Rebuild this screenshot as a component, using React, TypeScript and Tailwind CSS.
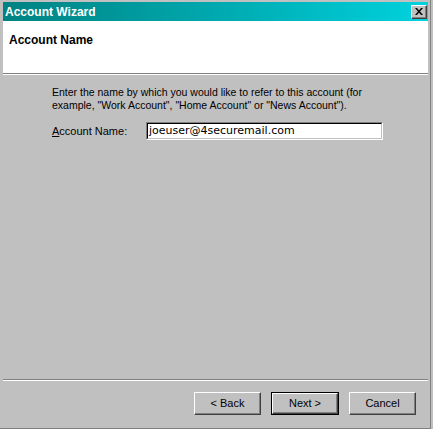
export default function App() {
  return (
    <div className="w-[433px] h-[429px] bg-[#c0c0c0] font-['Liberation_Sans',Arial,sans-serif] text-black">
      <div className="flex h-[429px] w-[431px] flex-col border-r border-b border-r-[#808080] border-b-[#808080] pl-[3px] pr-[2px] pt-[2px] pb-[1px]">
        {/* title bar */}
        <div className="flex h-[19px] items-center justify-between bg-gradient-to-r from-[#008282] to-[#00d2de] pl-[2px] pr-[1px]">
          <span className="text-[12px] font-bold text-white leading-none">Account Wizard</span>
          <button className="flex h-[14px] w-[16px] items-center justify-center border border-t-white border-l-white border-r-[#404040] border-b-[#404040] bg-[#c0c0c0] shadow-[inset_-1px_-1px_0_#808080]">
            <svg width="8" height="7" viewBox="0 0 8 7">
              <path d="M0 0h2l2 2.5L6 0h2L5 3.5 8 7H6L4 4.5 2 7H0l3-3.5z" fill="#000" />
            </svg>
          </button>
        </div>
        {/* header */}
        <div className="h-[54px] border-b border-b-white bg-white">
          <div className="h-[53px] border-b border-b-[#808080] pl-[6px] pt-[12px]">
            <h1 className="text-[12px] font-bold leading-[14px]">Account Name</h1>
          </div>
        </div>
        {/* body */}
        <div className="flex flex-1 flex-col pl-[49px] pt-[11px] text-[11px]">
          <p className="text-[10.5px] leading-[13px]">
            Enter the name by which you would like to refer to this account (for
            <br />
            example, "Work Account", "Home Account" or "News Account").
          </p>
          <div className="mt-[10px] flex items-center">
            <label className="w-[94px] leading-[13px]">
              <span className="underline">A</span>ccount Name:
            </label>
            <div className="h-[18px] w-[237px] border border-t-[#808080] border-l-[#808080] border-r-white border-b-white">
              <div className="flex h-full items-center border border-t-black border-l-black border-r-[#c0c0c0] border-b-[#c0c0c0] bg-white pl-[1px] font-['DejaVu_Sans',sans-serif] text-[11px]">
                joeuser@4securemail.com
              </div>
            </div>
          </div>
        </div>
        {/* separator */}
        <div className="h-[2px] border-t border-t-[#808080] border-b border-b-white" />
        {/* buttons */}
        <div className="flex h-[46px] items-start justify-end gap-[10px] pr-[12px] pt-[11px] text-[11px]">
          <button className="h-[23px] w-[67px] border border-t-white border-l-white border-r-[#404040] border-b-[#404040] shadow-[inset_-1px_-1px_0_#808080]">
            &lt; Back
          </button>
          <button className="h-[23px] w-[68px] border border-black">
            <div className="flex h-full w-full items-center justify-center border border-t-white border-l-white border-r-[#404040] border-b-[#404040] shadow-[inset_-1px_-1px_0_#808080]">
              Next &gt;
            </div>
          </button>
          <button className="h-[23px] w-[67px] border border-t-white border-l-white border-r-[#404040] border-b-[#404040] shadow-[inset_-1px_-1px_0_#808080]">
            Cancel
          </button>
        </div>
      </div>
    </div>
  );
}
